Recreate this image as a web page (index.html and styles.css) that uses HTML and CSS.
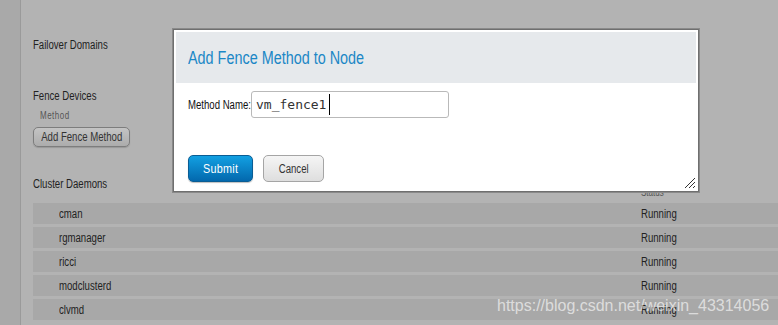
FILE: index.html
```html
<!DOCTYPE html>
<html>
<head>
<meta charset="utf-8">
<link rel="stylesheet" href="styles.css">
</head>
<body>
<div class="page">
  <aside class="side"></aside>
  <main class="main">
    <h3 class="sec sec-failover"><span class="nar">Failover Domains</span></h3>
    <h3 class="sec sec-fence"><span class="nar">Fence Devices</span></h3>
    <div class="method-label"><span class="nar">Method</span></div>
    <button class="btn-gray"><span class="nar-c">Add Fence Method</span></button>
    <h3 class="sec sec-daemons"><span class="nar">Cluster Daemons</span></h3>
    <div class="thead"><span class="col-name"></span><span class="col-status"><span class="nar">Status</span></span></div>
    <div class="rows">
      <div class="row"><span class="col-name"><span class="nar">cman</span></span><span class="col-status"><span class="nar">Running</span></span></div>
      <div class="row"><span class="col-name"><span class="nar">rgmanager</span></span><span class="col-status"><span class="nar">Running</span></span></div>
      <div class="row"><span class="col-name"><span class="nar">ricci</span></span><span class="col-status"><span class="nar">Running</span></span></div>
      <div class="row"><span class="col-name"><span class="nar">modclusterd</span></span><span class="col-status"><span class="nar">Running</span></span></div>
      <div class="row"><span class="col-name"><span class="nar">clvmd</span></span><span class="col-status"><span class="nar">Running</span></span></div>
    </div>
  </main>
</div>

<div class="dialog">
  <div class="dlg-head"><h2 class="dlg-title"><span class="nar">Add Fence Method to Node</span></h2></div>
  <div class="dlg-body">
    <label class="field-label"><span class="nar">Method Name:</span></label>
    <div class="input">vm_fence1<span class="caret"></span></div>
  </div>
  <div class="dlg-actions">
    <button class="btn-blue"><span class="nar-s">Submit</span></button>
    <button class="btn-cancel"><span class="nar-c">Cancel</span></button>
  </div>
  <svg class="grip" width="12" height="12" viewBox="0 0 12 12">
    <path d="M1 11 L11 1 M5 11 L11 5 M9 11 L11 9" stroke="#333" stroke-width="1" fill="none"/>
  </svg>
</div>

<div class="watermark">https://blog.csdn.net/weixin_43314056</div>
</body>
</html>
```

FILE: styles.css
```css
html, body {
  margin: 0;
  padding: 0;
  height: 100%;
  overflow: hidden;
  background: #b3b3b3;
  font-family: "Liberation Sans", Arial, sans-serif;
  color: #222;
}

.nar {
  display: inline-block;
  white-space: nowrap;
  transform: scaleX(0.8);
  transform-origin: left center;
}

.nar-c {
  display: inline-block;
  white-space: nowrap;
  transform: scaleX(0.8);
  transform-origin: center center;
}

.nar-s {
  display: inline-block;
  white-space: nowrap;
  letter-spacing: 0.3px;
  transform: scaleX(0.9);
  transform-origin: center center;
}

.page {
  display: flex;
  height: 325px;
}

.side {
  width: 20px;
  flex: none;
  background: #a9a9a9;
  border-right: 1px solid #9a9a9a;
}

.main {
  flex: 1;
  padding-left: 12px;
  min-width: 0;
}

.sec {
  margin: 0;
  font-size: 12px;
  font-weight: normal;
  line-height: 14px;
  color: #222;
}

.sec-failover { margin-top: 38px; }
.sec-fence { margin-top: 37px; }
.sec-daemons { margin-top: 30px; }

.method-label {
  margin: 7px 0 0 7px;
  font-size: 10px;
  line-height: 12px;
  color: #555;
  letter-spacing: 0.6px;
}

.btn-gray {
  display: flex;
  align-items: center;
  justify-content: center;
  margin-top: 5px;
  width: 97px;
  height: 20px;
  padding: 0;
  font-family: inherit;
  font-size: 12px;
  color: #333;
  background: linear-gradient(#c4c4c4, #acacac);
  border: 1px solid #7d7d7d;
  border-radius: 5px;
  box-shadow: 0 1px 1px rgba(0,0,0,0.15);
}

.thead {
  display: flex;
  margin-top: -4px;
  height: 15px;
  font-size: 10px;
  line-height: 12px;
  color: #555;
}

.rows {
  display: flex;
  flex-direction: column;
  gap: 3px;
  margin-top: 1px;
}

.row {
  display: flex;
  height: 21px;
  align-items: center;
  background: #a8a8a8;
  font-size: 12px;
  color: #222;
}

.col-name {
  width: 582px;
  padding-left: 26px;
  flex: none;
}

.col-status {
  flex: 1;
}

/* dialog */
.dialog {
  position: absolute;
  left: 173px;
  top: 29px;
  width: 520px;
  height: 157px;
  background: #fff;
  border: 1px solid #6f6f6f;
  box-shadow: 0 0 0 1px #8a8a8a;
  padding: 2px;
}

.dlg-head {
  height: 51px;
  background: #e6e9ec;
  display: flex;
  align-items: center;
}

.dlg-title {
  margin: 0 0 0 12px;
  font-size: 18px;
  font-weight: normal;
  color: #1b87c6;
  line-height: 20px;
}

.dlg-body {
  display: flex;
  align-items: center;
  gap: 2px;
  margin: 8px 0 0 12px;
}

.field-label {
  width: 61px;
  flex: none;
  font-size: 12px;
  color: #111;
}

.input {
  width: 192px;
  height: 25px;
  border: 1px solid #b9b9b9;
  border-radius: 3px;
  padding-left: 4px;
  display: flex;
  align-items: center;
  font-family: "DejaVu Sans Mono", monospace;
  font-size: 13px;
  color: #333;
}

.caret {
  display: inline-block;
  width: 1px;
  height: 21px;
  background: #000;
  margin-left: 3px;
}

.dlg-actions {
  display: flex;
  gap: 10px;
  margin: 37px 0 0 12px;
}

.btn-blue {
  width: 65px;
  height: 27px;
  padding: 0;
  font-family: "Liberation Sans", Arial, sans-serif;
  font-size: 12px;
  color: #fff;
  background: linear-gradient(#12a0e2, #0368ad);
  border: 1px solid #0a5d94;
  border-radius: 5px;
  box-shadow: 0 1px 1px rgba(0,0,0,0.25);
}

.btn-cancel {
  width: 61px;
  height: 27px;
  padding: 0;
  font-family: inherit;
  font-size: 12px;
  color: #333;
  background: linear-gradient(#f5f5f5, #dedede);
  border: 1px solid #a5a5a5;
  border-radius: 5px;
}

.grip {
  position: absolute;
  right: 2px;
  bottom: 2px;
}

.watermark {
  position: absolute;
  left: 497px;
  top: 296px;
  font-family: "Liberation Sans", Arial, sans-serif;
  font-size: 16px;
  line-height: 20px;
  color: rgba(255,255,255,0.62);
  white-space: nowrap;
}
```
